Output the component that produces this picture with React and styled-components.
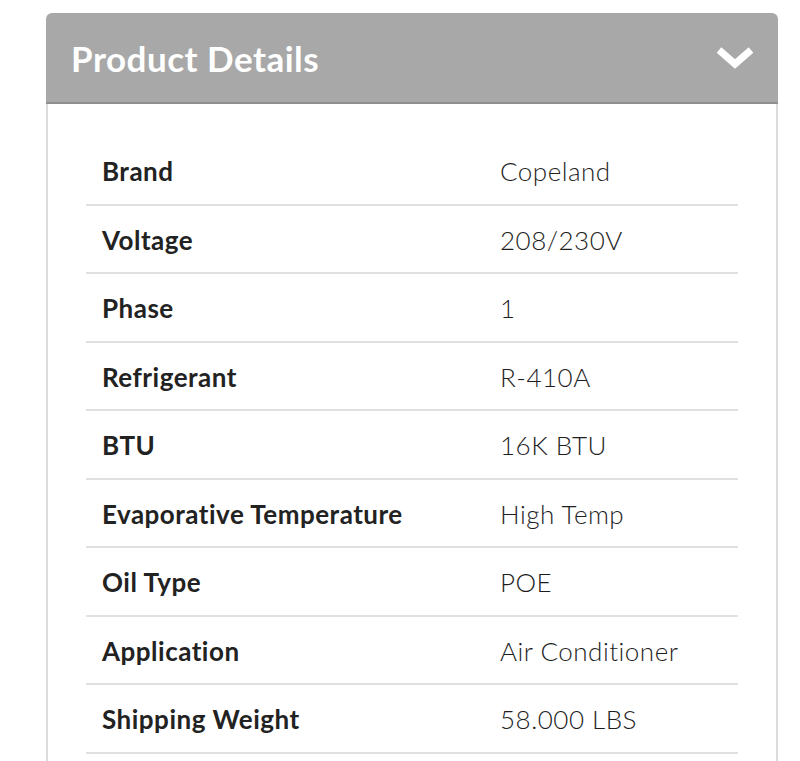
import React from "react";
import styled, { createGlobalStyle } from "styled-components";

const Global = createGlobalStyle`
  body {
    margin: 0;
    background: #fff;
    font-family: Lato, "Open Sans", "Liberation Sans", sans-serif;
  }
`;

const Page = styled.div`
  padding: 13px 22px 0 46px;
`;

const Card = styled.section`
  width: 732px;
  border-radius: 6px 6px 0 0;
  overflow: hidden;
`;

const Header = styled.div`
  height: 89px;
  background: #a8a8a8;
  border-bottom: 2px solid #8f8f8f;
  display: flex;
  align-items: center;
  justify-content: space-between;
  padding: 0 24px 0 25px;
`;

const Title = styled.h2`
  margin: 0;
  color: #fff;
  font-size: 35px;
  font-weight: 700;
  letter-spacing: 0.5px;
`;

const Body = styled.div`
  border-left: 2px solid #dcdcdc;
  border-right: 2px solid #dcdcdc;
  padding: 33px 38px 0 38px;
  height: 624px;
`;

const Row = styled.div`
  display: grid;
  grid-template-columns: 398px 1fr;
  align-items: center;
  padding: 2px 16px 0;
  box-sizing: border-box;
  height: 68.5px;
  border-bottom: 2px solid #dfe0e1;
  color: #222;
  font-size: 26px;
  letter-spacing: 0.5px;
`;

const Label = styled.div`
  font-weight: 700;
`;

const Value = styled.div`
  font-weight: 300;
  color: #1e1e1e;
`;

const rows = [
  ["Brand", "Copeland"],
  ["Voltage", "208/230V"],
  ["Phase", "1"],
  ["Refrigerant", "R-410A"],
  ["BTU", "16K BTU"],
  ["Evaporative Temperature", "High Temp"],
  ["Oil Type", "POE"],
  ["Application", "Air Conditioner"],
  ["Shipping Weight", "58.000 LBS"]
];

function Chevron() {
  return (
    <svg width="38" height="24" viewBox="0 0 38 24">
      <path d="M3 4 L19 18 L35 4" fill="none" stroke="#fff" strokeWidth="7" strokeLinejoin="miter" />
    </svg>
  );
}

export default function App() {
  return (
    <Page>
      <Global />
      <Card>
        <Header>
          <Title>Product Details</Title>
          <Chevron />
        </Header>
        <Body>
          {rows.map(([k, v]) => (
            <Row key={k}>
              <Label>{k}</Label>
              <Value>{v}</Value>
            </Row>
          ))}
        </Body>
      </Card>
    </Page>
  );
}
